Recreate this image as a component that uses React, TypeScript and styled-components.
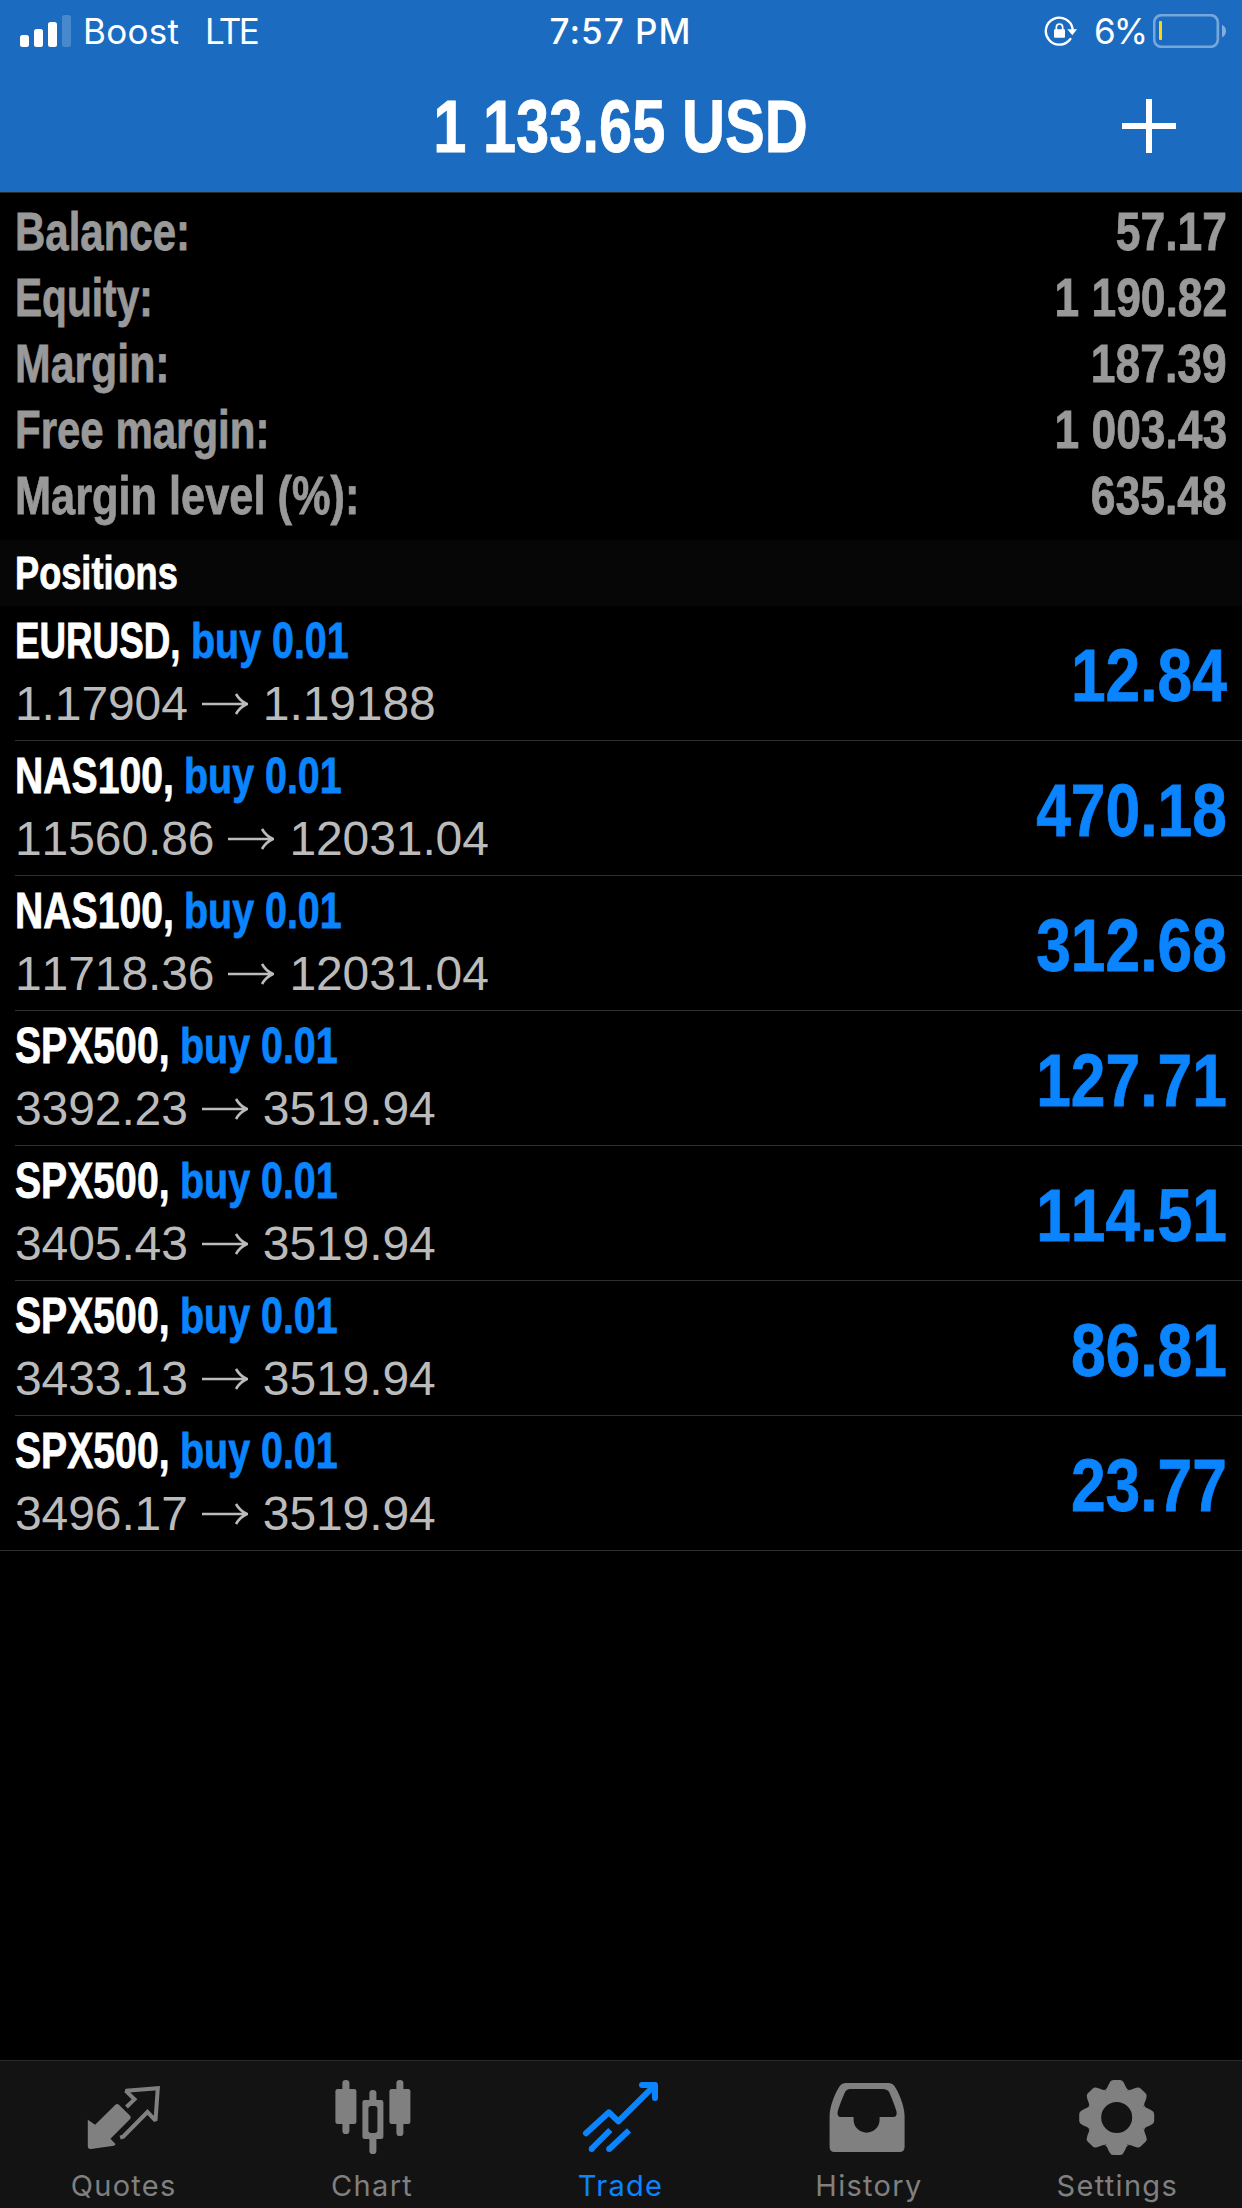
import React from "react";
import styled, { createGlobalStyle } from "styled-components";

const BLUE = "#0a84ff";
const GREY = "#808080";
const UI_FONT = `Inter, "Noto Sans", sans-serif`;
const TEXT_FONT = `"Liberation Sans", Arial, sans-serif`;

const GlobalStyle = createGlobalStyle`
  html, body { margin: 0; background: #000; }
  * { box-sizing: border-box; }
`;

const Screen = styled.div`
  width: 1242px;
  height: 2208px;
  display: flex;
  flex-direction: column;
  overflow: hidden;
  background: #000;
  color: #fff;
  font-family: ${TEXT_FONT};
`;

/* Header */

const Header = styled.header`
  height: 193px;
  flex: none;
  background: #1b6cc1;
  border-bottom: 1px solid #2b2b2b;
`;

const StatusBar = styled.div`
  height: 60px;
  padding: 2px 16px 0 20px;
  display: grid;
  grid-template-columns: 1fr auto 1fr;
  align-items: center;
  font-family: ${UI_FONT};
  font-size: 35px;
  line-height: 58px;
`;

const StatusLeft = styled.div`
  display: flex;
  align-items: center;
`;

const StatusRight = styled.div`
  display: flex;
  align-items: center;
  justify-content: flex-end;
`;

const Signal = styled.div`
  height: 32px;
  display: flex;
  align-items: flex-end;
  gap: 5px;
`;

const SignalBar = styled.span<{ $height: number; $dim?: boolean }>`
  width: 9px;
  height: ${(p) => p.$height}px;
  border-radius: 2.5px;
  background: #fff;
  opacity: ${(p) => (p.$dim ? 0.2 : 1)};
`;

const Carrier = styled.span`
  margin-left: 12px;
  width: 122px;
  letter-spacing: 0.3px;
`;

const Network = styled.span`
  letter-spacing: -2.6px;
`;

const Clock = styled.span`
  margin-right: 5px;
  font-weight: 500;
  letter-spacing: 1px;
`;

const BatteryLevel = styled.span`
  margin: 0 7px 0 16px;
  letter-spacing: -2px;
`;

const NavBar = styled.div`
  height: 132px;
  padding: 0 66px;
  display: grid;
  grid-template-columns: 54px 1fr 54px;
  align-items: center;
`;

const Condensed = styled.span<{ $scale: number; $origin?: string }>`
  display: block;
  font-weight: 700;
  font-kerning: none;
  white-space: nowrap;
  -webkit-text-stroke: 0.8px currentColor;
  transform: scaleX(${(p) => p.$scale});
  transform-origin: ${(p) => p.$origin ?? "left"} center;
`;

const Title = styled.h1`
  margin: 0;
  padding-right: 1px;
  font-size: 75px;
  line-height: 132px;
  text-align: center;
`;

/* Account summary */

const Summary = styled.section`
  padding: 6px 15px 11px 15px;
`;

const SummaryRow = styled.div`
  height: 66px;
  display: flex;
  justify-content: space-between;
  font-size: 53.5px;
  line-height: 66px;
  color: #999;
`;

const SectionTitle = styled.h2`
  margin: 0;
  height: 66px;
  padding: 0 15px;
  background: #060606;
  font-size: 46.5px;
  line-height: 66px;
`;

/* Positions */

const PositionList = styled.ul`
  margin: 0;
  padding: 0;
  list-style: none;
  flex: 1;
`;

const PositionItem = styled.li`
  height: 135px;
  padding-left: 15px;

  &:last-child {
    padding-left: 0;
  }

  &:last-child > div {
    padding-left: 15px;
  }
`;

const PositionBody = styled.div`
  height: 135px;
  padding: 5px 15px 0 0;
  display: flex;
  justify-content: space-between;
  border-bottom: 1px solid #303030;
`;

const PositionHead = styled.div`
  display: flex;
  height: 60px;
  font-size: 50px;
  line-height: 60px;
`;

const SymbolSlot = styled.div<{ $width: number }>`
  width: ${(p) => p.$width}px;
`;

const Volume = styled.div`
  color: ${BLUE};
`;

const Prices = styled.div`
  display: flex;
  align-items: center;
  height: 62px;
  margin-top: 2px;
  font-size: 48px;
  line-height: 62px;
  font-kerning: none;
  letter-spacing: -0.1px;
  color: #bbb;
`;

const ArrowIcon = styled.svg`
  width: 46px;
  height: 24px;
  margin: 0 15px 0 14px;
`;

const Profit = styled.div`
  font-size: 73.5px;
  line-height: 129px;
  color: ${BLUE};
`;

/* Tab bar */

const TabBar = styled.nav`
  height: 148px;
  flex: none;
  display: flex;
  background: #131313;
  border-top: 1px solid #2a2a2a;
`;

const Tab = styled.a<{ $active?: boolean }>`
  flex: 1;
  padding-top: 15px;
  display: flex;
  flex-direction: column;
  align-items: center;
  color: ${(p) => (p.$active ? BLUE : GREY)};
`;

const TabIcon = styled.svg`
  width: 90px;
  height: 80px;
  flex: none;
`;

const TabLabel = styled.span`
  margin-top: 12px;
  margin-right: 1px;
  font-family: ${UI_FONT};
  font-weight: 400;
  font-size: 29px;
  line-height: 36px;
  letter-spacing: 1.3px;
`;

const summary = [
  { label: "Balance:", value: "57.17", scale: 0.785 },
  { label: "Equity:", value: "1 190.82", scale: 0.76 },
  { label: "Margin:", value: "187.39", scale: 0.8 },
  { label: "Free margin:", value: "1 003.43", scale: 0.785 },
  { label: "Margin level (%):", value: "635.48", scale: 0.81 },
];

const symbols: Record<string, { width: number; scale: number }> = {
  EURUSD: { width: 176, scale: 0.735 },
  NAS100: { width: 169, scale: 0.783 },
  SPX500: { width: 165, scale: 0.783 },
};

const positions = [
  { symbol: "EURUSD", open: "1.17904", current: "1.19188", profit: "12.84" },
  { symbol: "NAS100", open: "11560.86", current: "12031.04", profit: "470.18" },
  { symbol: "NAS100", open: "11718.36", current: "12031.04", profit: "312.68" },
  { symbol: "SPX500", open: "3392.23", current: "3519.94", profit: "127.71" },
  { symbol: "SPX500", open: "3405.43", current: "3519.94", profit: "114.51" },
  { symbol: "SPX500", open: "3433.13", current: "3519.94", profit: "86.81" },
  { symbol: "SPX500", open: "3496.17", current: "3519.94", profit: "23.77" },
];

const RotationLock = () => (
  <svg width="34" height="32" viewBox="135 46 102 96" fill="none">
    <path d="M214 118 A40.5 40.5 0 1 1 221 88" stroke="#fff" strokeWidth="7" strokeLinecap="round" />
    <path d="M205 89 H234 L220 107 Z" fill="#fff" />
    <rect x="165" y="89" width="33" height="25" rx="3" fill="#fff" />
    <path d="M172 91 V83 A9.5 10 0 0 1 191 83 V91" stroke="#fff" strokeWidth="5" />
  </svg>
);

const Battery = () => (
  <svg width="73" height="34" viewBox="459 39 219 102">
    <rect x="462.5" y="42.5" width="191" height="95" rx="22" fill="none" stroke="#fff" strokeOpacity="0.4" strokeWidth="8" />
    <rect x="477" y="60" width="9" height="57" rx="3" fill="#ffd60a" />
    <path d="M666 71 Q678 77 678 90 Q678 103 666 109 Z" fill="#fff" fillOpacity="0.45" />
  </svg>
);

const PlusIcon = () => (
  <svg width="54" height="54" viewBox="0 0 54 54" stroke="#fff" strokeWidth="6">
    <path d="M27 0 V54 M0 27 H54" />
  </svg>
);

const QuotesIcon = () => (
  <TabIcon viewBox="237.6 78 270 240" fill="none">
    <path
      d="M264 209 L286 224 L346 165 Q352 159 358 165 L391 197 Q395 202 391 207 L332 266 L347 282 Q347 286 342 287 L274 297 Q264 298 264 289 Z"
      fill="currentColor"
    />
    <path
      d="M380 171 L404 148 L378 122.500 L474 114.500 L467 212 L443 186 L370 260 L361 263"
      stroke="currentColor"
      strokeWidth="12"
      strokeLinejoin="miter"
      strokeMiterlimit="2"
    />
  </TabIcon>
);

const ChartIcon = () => (
  <TabIcon viewBox="982.8 78 270 240" fill="currentColor">
    <rect x="1005" y="117" width="63" height="105" rx="7" />
    <rect x="1026" y="90" width="21" height="162" rx="10" />
    <rect x="1167" y="117" width="63" height="105" rx="7" />
    <rect x="1188" y="90" width="21" height="168" rx="10" />
    <rect x="1107" y="120" width="21" height="40" rx="10" />
    <rect x="1107" y="258" width="21" height="54" rx="10" />
    <path
      fillRule="evenodd"
      d="M1093 150 H1142 Q1149 150 1149 157 V260 Q1149 267 1142 267 H1093 Q1086 267 1086 260 V157 Q1086 150 1093 150 Z M1112 168 Q1104 168 1104 176 V241 Q1104 249 1112 249 H1123 Q1131 249 1131 241 V176 Q1131 168 1123 168 Z"
    />
  </TabIcon>
);

const TradeIcon = () => (
  <TabIcon viewBox="468 78 270 240" fill="none" stroke="currentColor" strokeWidth="18">
    <path d="M498 250 L567 187 L595 214 L703 107" strokeLinecap="round" strokeLinejoin="round" />
    <path d="M666 105 H705 V144" strokeLinecap="round" strokeLinejoin="round" />
    <path d="M514 297 L571 240 M568 297 L627 241" />
    <circle cx="515" cy="297" r="9" fill="currentColor" stroke="none" />
    <circle cx="567.500" cy="297" r="9" fill="currentColor" stroke="none" />
  </TabIcon>
);

const HistoryIcon = () => (
  <TabIcon viewBox="73.2 78 270 240" fill="currentColor">
    <path
      fillRule="evenodd"
      d="M90 197 C91 165 108 126 121 107 Q127 99 137 99 H268 Q278 99 284 107 C297 126 314 165 315 197 V291 Q315 306 300 306 H105 Q90 306 90 291 Z M152 117 Q140 118 136 127 C128 146 118 170 114 186 Q112 201 124 201 H162 V209 A39 39 0 0 0 240 209 V201 H281 Q293 201 291 186 C287 170 277 146 269 127 Q265 118 248 117 Z"
    />
  </TabIcon>
);

const TOOTH =
  "M-35 -83 C-28 -86 -28 -93 -21 -105 Q-18 -112.500 -10 -112.500 H10 Q18 -112.500 21 -105 C28 -93 28 -86 35 -83 L0 -60 Z";

const SettingsIcon = () => (
  <TabIcon viewBox="818.4 78 270 240" fill="currentColor">
    <g transform="translate(949.5 202.5)">
      {[0, 45, 90, 135, 180, 225, 270, 315].map((angle) => (
        <path key={angle} d={TOOTH} transform={`rotate(${angle})`} />
      ))}
      <circle r="67" fill="none" stroke="currentColor" strokeWidth="41" />
    </g>
  </TabIcon>
);

const tabs = [
  { label: "Quotes", Icon: QuotesIcon },
  { label: "Chart", Icon: ChartIcon },
  { label: "Trade", Icon: TradeIcon, active: true },
  { label: "History", Icon: HistoryIcon },
  { label: "Settings", Icon: SettingsIcon },
];

export default function App() {
  return (
    <>
      <GlobalStyle />
      <Screen>
        <Header>
          <StatusBar>
            <StatusLeft>
              <Signal>
                <SignalBar $height={12} />
                <SignalBar $height={18} />
                <SignalBar $height={25} />
                <SignalBar $height={32} $dim />
              </Signal>
              <Carrier>Boost</Carrier>
              <Network>LTE</Network>
            </StatusLeft>
            <Clock>7:57 PM</Clock>
            <StatusRight>
              <RotationLock />
              <BatteryLevel>6%</BatteryLevel>
              <Battery />
            </StatusRight>
          </StatusBar>
          <NavBar>
            <span />
            <Title>
              <Condensed $scale={0.795} $origin="center">
                1 133.65 USD
              </Condensed>
            </Title>
            <PlusIcon />
          </NavBar>
        </Header>

        <Summary>
          {summary.map((row) => (
            <SummaryRow key={row.label}>
              <Condensed $scale={row.scale}>{row.label}</Condensed>
              <Condensed $scale={0.83} $origin="right">
                {row.value}
              </Condensed>
            </SummaryRow>
          ))}
        </Summary>

        <SectionTitle>
          <Condensed $scale={0.778}>Positions</Condensed>
        </SectionTitle>

        <PositionList>
          {positions.map((p, i) => (
            <PositionItem key={i}>
              <PositionBody>
                <div>
                  <PositionHead>
                    <SymbolSlot $width={symbols[p.symbol].width}>
                      <Condensed $scale={symbols[p.symbol].scale}>{p.symbol},</Condensed>
                    </SymbolSlot>
                    <Volume>
                      <Condensed $scale={0.788}>buy 0.01</Condensed>
                    </Volume>
                  </PositionHead>
                  <Prices>
                    {p.open}
                    <ArrowIcon viewBox="0 0 46 24" fill="none" stroke="currentColor" strokeWidth="2.6">
                      <path d="M0 12 H44 M34 2 Q38 9 45 12 Q38 15 34 22" />
                    </ArrowIcon>
                    {p.current}
                  </Prices>
                </div>
                <Profit>
                  <Condensed $scale={0.848} $origin="right">
                    {p.profit}
                  </Condensed>
                </Profit>
              </PositionBody>
            </PositionItem>
          ))}
        </PositionList>

        <TabBar>
          {tabs.map(({ label, Icon, active }) => (
            <Tab key={label} $active={active}>
              <Icon />
              <TabLabel>{label}</TabLabel>
            </Tab>
          ))}
        </TabBar>
      </Screen>
    </>
  );
}
